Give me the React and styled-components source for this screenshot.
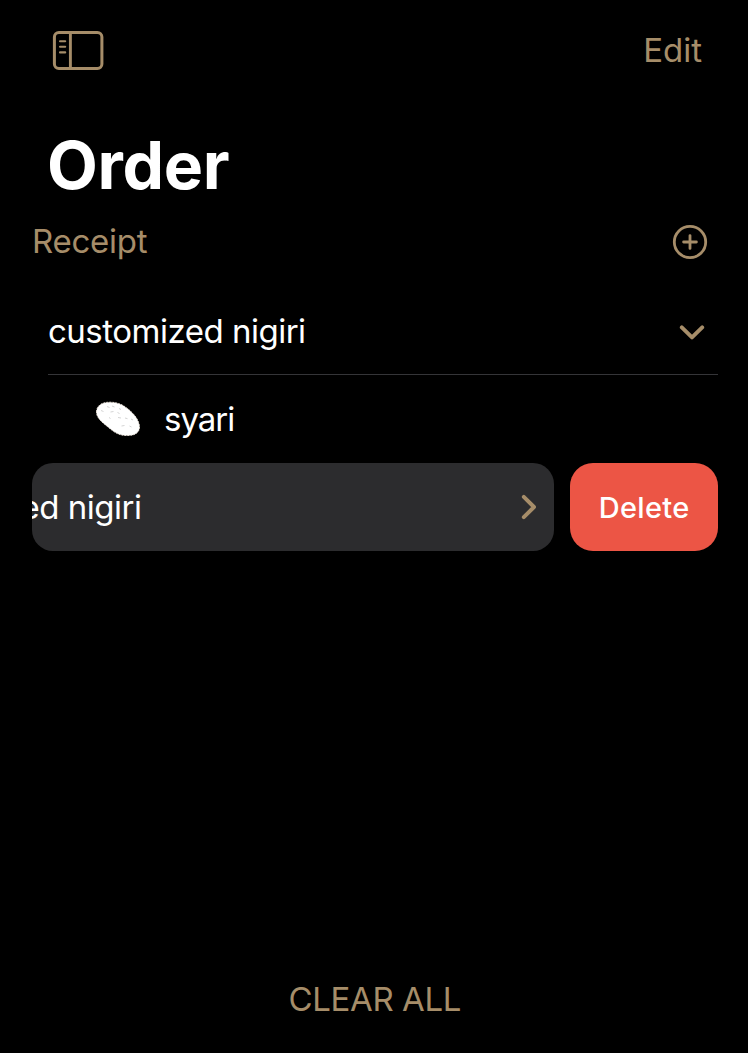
import React from "react";
import styled, { createGlobalStyle } from "styled-components";

const gold = "#a68d69";

const GlobalStyle = createGlobalStyle`
  * { box-sizing: border-box; }
  body { margin: 0; background: #000; }
  button { border: 0; padding: 0; background: none; font: inherit; color: inherit; display: flex; }
  svg { display: block; flex: none; }
`;

const Screen = styled.div`
  display: flex;
  flex-direction: column;
  width: 748px;
  height: 1053px;
  overflow: hidden;
  background: #000;
  color: #fff;
  font-family: Inter, "Liberation Sans", sans-serif;
  font-size: 33px;
`;

const Toolbar = styled.header`
  display: flex;
  justify-content: space-between;
  align-items: center;
  height: 100px;
  padding: 0 46px 0 52px;
  color: ${gold};
`;

const Label = styled.span`
  line-height: 40px;
  white-space: nowrap;
  letter-spacing: ${(p) => p.$spacing || 0}px;
  margin-right: ${(p) => -(p.$spacing || 0)}px;
`;

const Title = styled.h1`
  margin: 0;
  padding-left: 47px;
  height: 130px;
  font-size: 66px;
  font-weight: 700;
  line-height: 131px;
  letter-spacing: -0.3px;
`;

const SectionHeader = styled.div`
  display: flex;
  align-items: flex-start;
  justify-content: space-between;
  height: 57px;
  padding: 0 40px 0 32px;
  color: ${gold};

  ${Label} {
    line-height: 22px;
  }

  button {
    margin-top: -6px;
  }
`;

const List = styled.main`
  flex: 1;
  padding: 0 30px 0 32px;
`;

const Row = styled.div`
  display: flex;
  align-items: center;
  justify-content: space-between;
  height: 88px;
  margin-left: 16px;
  padding-right: 13px;
  border-bottom: 1px solid #353538;
`;

const SubRow = styled.div`
  display: flex;
  align-items: center;
  gap: 23px;
  height: 88px;
  padding-left: 63px;
`;

const SwipeRow = styled.div`
  display: flex;
  gap: 16px;
  height: 88px;
`;

const SwipedCell = styled.div`
  display: flex;
  align-items: center;
  justify-content: flex-end;
  gap: 378px;
  width: 522px;
  padding-right: 16px;
  border-radius: 21px;
  overflow: hidden;
  background: #2c2c2e;
`;

const DeleteButton = styled.button`
  flex: 1;
  align-items: center;
  justify-content: center;
  padding-top: 1px;
  border-radius: 23px;
  background: #ec5545;
  color: #fff;
  font-size: 29px;
  font-weight: 500;
`;

const Footer = styled.footer`
  display: flex;
  justify-content: center;
  height: 74px;
  padding-left: 2px;
  color: ${gold};
`;

const SidebarIcon = () => (
  <svg width="52" height="41" viewBox="0 0 52 41" fill="none" stroke={gold}>
    <rect x="2.4" y="2.4" width="47.5" height="36.2" rx="4.5" strokeWidth="3" />
    <path d="M18.4 2.5v36" strokeWidth="2.9" />
    <path d="M8 11.2h5.2M8 16.8h5.2M8 22.4h5.2" strokeWidth="2.1" strokeLinecap="round" />
  </svg>
);

const PlusCircleIcon = () => (
  <svg width="36" height="36" viewBox="0 0 36 36" fill="none" stroke={gold} strokeWidth="2.8" strokeLinecap="round">
    <circle cx="18" cy="18" r="15.7" />
    <path d="M18 11.6v12.8M11.6 18h12.8" />
  </svg>
);

const Chevron = ({ right }) => (
  <svg
    width={right ? 18 : 26}
    height={right ? 26 : 18}
    viewBox={right ? "0 0 18 26" : "0 0 26 18"}
    fill="none"
    stroke={gold}
    strokeWidth="3.9"
    strokeLinecap="round"
    strokeLinejoin="round"
  >
    <path d={right ? "M3.8 2.8L14 13L3.800 23.2" : "M2.8 5.4L13 15.4L23.2 5.4"} />
  </svg>
);

const RiceImage = () => (
  <svg width="46" height="38" viewBox="0 0 46 38">
    <path
      d="M1.500 12C1.500 6 6.500 2 15 2.200C23 2.200 28.500 5 34 9.800C40 15 43.500 20 44.500 26C45 32.500 40 35.500 33 35.500C24 36 19 32 13 27C7 22 1.500 18 1.500 12Z"
      fill="#fff"
      stroke="#eee7dc"
      strokeWidth="0.9"
      strokeDasharray="2 1"
    />
    <path
      d="M6 10.500l2.500 1M12 6.500l2.500 1M17 6l2.500 1M24 8.500l2 1M15.500 12l3-.5M22.500 12.500l2 1M14 17.500l1.500 1M23 17.500l3 .5M30 18l2.500 .7M36 19l2 1M26.500 26l3-.5M34.500 26l2 1"
      fill="none"
      stroke="#cfcfcf"
      strokeWidth="0.9"
    />
  </svg>
);

export default function App() {
  return (
    <>
      <GlobalStyle />
      <Screen>
        <Toolbar>
          <button aria-label="Toggle sidebar"><SidebarIcon /></button>
          <button><Label>Edit</Label></button>
        </Toolbar>
        <Title>Order</Title>
        <SectionHeader>
          <Label $spacing={-0.25}>Receipt</Label>
          <button aria-label="Add"><PlusCircleIcon /></button>
        </SectionHeader>
        <List>
          <Row>
            <Label $spacing={-0.5}>customized nigiri</Label>
            <Chevron />
          </Row>
          <SubRow>
            <RiceImage />
            <Label $spacing={-1}>syari</Label>
          </SubRow>
          <SwipeRow>
            <SwipedCell>
              <Label $spacing={-0.5}>customized nigiri</Label>
              <Chevron right />
            </SwipedCell>
            <DeleteButton><Label $spacing={0.3}>Delete</Label></DeleteButton>
          </SwipeRow>
        </List>
        <Footer>
          <button><Label $spacing={-0.4}>CLEAR ALL</Label></button>
        </Footer>
      </Screen>
    </>
  );
}
